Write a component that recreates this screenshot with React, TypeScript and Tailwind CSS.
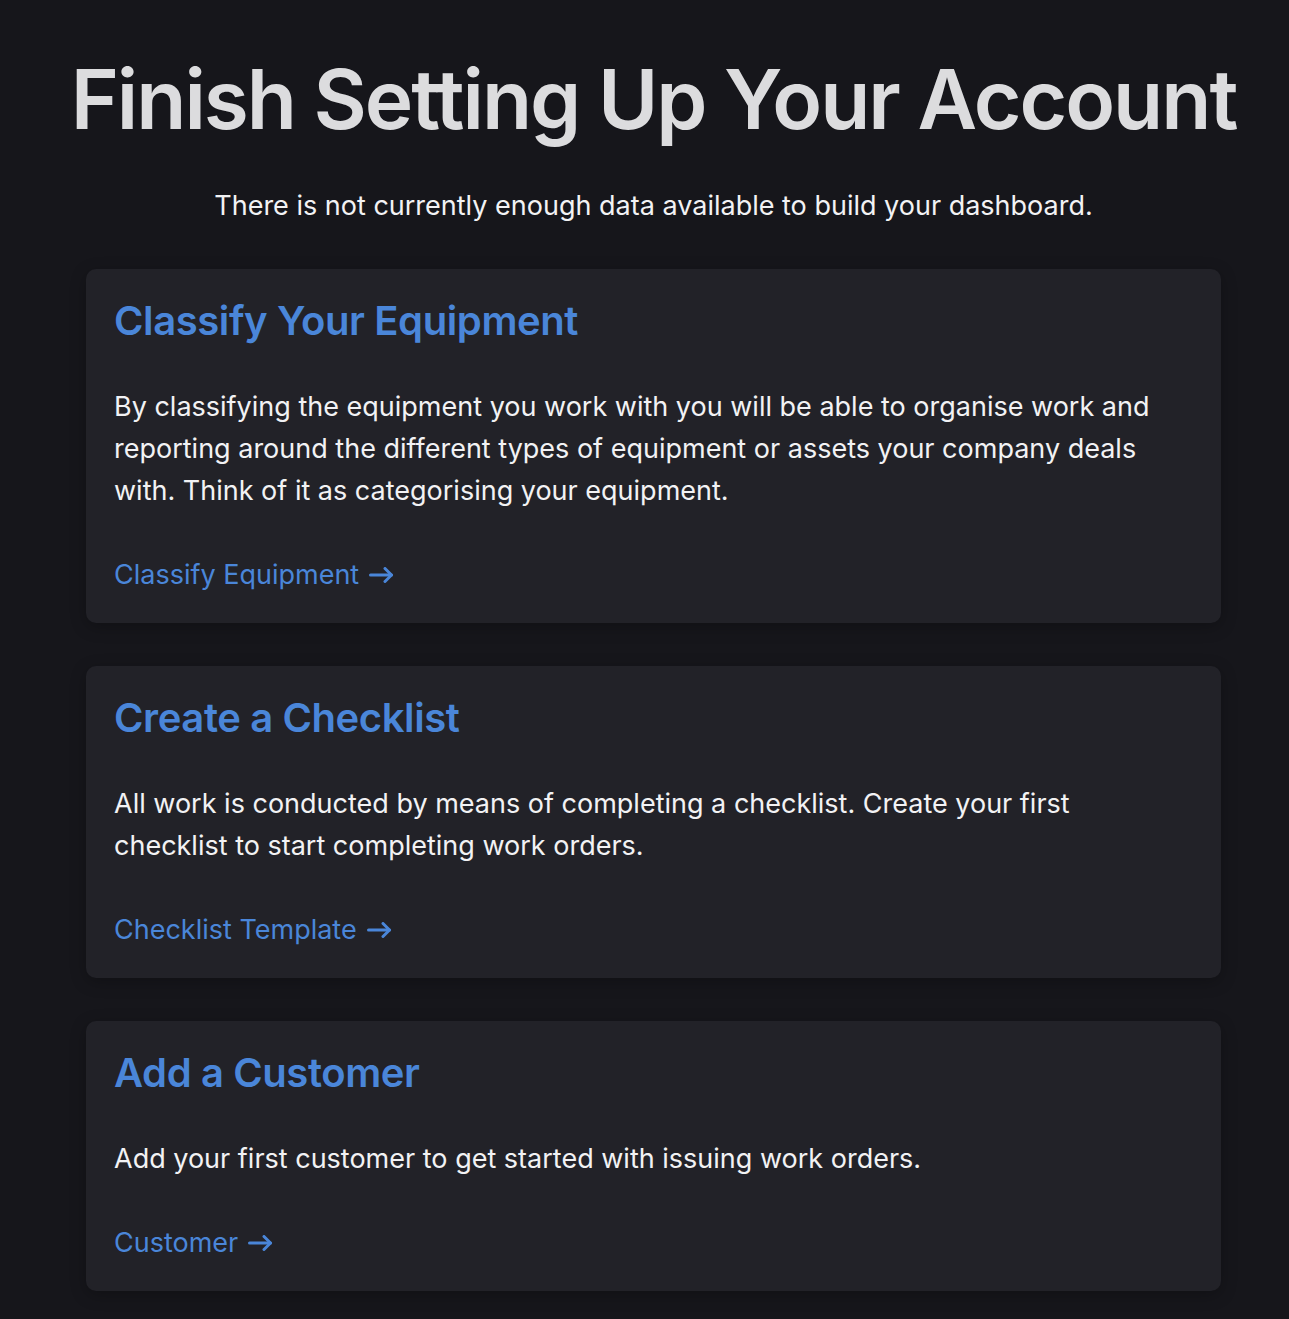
interface SetupStep {
  title: string;
  body: string;
  link: string;
}

const steps: SetupStep[] = [
  {
    title: 'Classify Your Equipment',
    body: 'By classifying the equipment you work with you will be able to organise work and reporting around the different types of equipment or assets your company deals with. Think of it as categorising your equipment.',
    link: 'Classify Equipment',
  },
  {
    title: 'Create a Checklist',
    body: 'All work is conducted by means of completing a checklist. Create your first checklist to start completing work orders.',
    link: 'Checklist Template',
  },
  {
    title: 'Add a Customer',
    body: 'Add your first customer to get started with issuing work orders.',
    link: 'Customer',
  },
];

function LinkArrow() {
  return (
    <svg viewBox="0 0 25 16" className="h-[16px] w-[25px]" fill="none" stroke="currentColor" strokeWidth={3} strokeLinecap="round" strokeLinejoin="round">
      <path d="M1.5 8h21" />
      <path d="M16 1.5l6.5 6.5-6.5 6.5" />
    </svg>
  );
}

function StepCard({ step }: { step: SetupStep }) {
  return (
    <div className="rounded-[10px] bg-[#222228] px-7 pt-7 pb-[27px] shadow-[0_4px_16px_rgba(0,0,0,0.25)]">
      <h2 className="text-[40px] font-semibold leading-[48px] tracking-[-0.01em] text-[#4a86d9]">
        {step.title}
      </h2>
      <p className="mt-[41px] pr-6 text-[27px] leading-[42px] text-[#f2f2f4]">{step.body}</p>
      <a href="#" className="mt-[42px] flex items-center gap-[10px] text-[27px] leading-[42px] text-[#4a86d9]">
        {step.link}
        <LinkArrow />
      </a>
    </div>
  );
}

export default function App() {
  return (
    <div className="min-h-screen bg-[#16161b] font-['Inter','Noto_Sans',sans-serif] [font-feature-settings:'calt'_0,'liga'_0]">
      <div className="ml-[86px] flex w-[1135px] flex-col pb-8">
        <h1 className="-mx-10 whitespace-nowrap pt-[52px] text-center text-[82px] font-semibold leading-[96px] tracking-[-0.025em] text-[#dcdcde]">
          Finish Setting Up Your Account
        </h1>
        <p className="mt-[38px] text-center text-[27px] leading-[40px] text-[#f2f2f4]">
          There is not currently enough data available to build your dashboard.
        </p>
        <div className="mt-[43px] flex flex-col gap-[43px]">
          {steps.map((step) => (
            <StepCard key={step.title} step={step} />
          ))}
        </div>
      </div>
    </div>
  );
}
